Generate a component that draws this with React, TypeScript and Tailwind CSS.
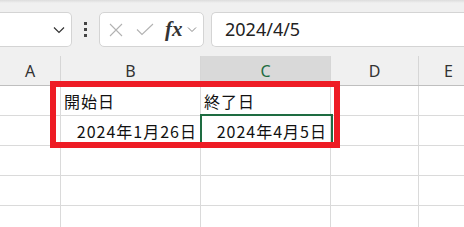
import React from 'react';

const cols = [
  { key: 'A', w: 'w-[61px]' },
  { key: 'B', w: 'w-[140px]' },
  { key: 'C', w: 'w-[130px]' },
  { key: 'D', w: 'w-[88px]' },
  { key: 'E', w: 'w-[60px]' },
];

const rows: { B?: string; C?: string; alignB?: string; alignC?: string }[] = [
  { B: '開始日', C: '終了日' },
  { B: '2024年1月26日', C: '2024年4月5日', alignB: 'right', alignC: 'right' },
  {},
  {},
  {},
];

export default function App() {
  return (
    <div className="relative w-[464px] h-[227px] overflow-hidden bg-white font-['Noto_Sans',sans-serif]">
      {/* Toolbar / formula bar */}
      <div className="h-[56px] bg-[#f0f0f0] bg-gradient-to-b from-[#dcdcdc] via-[#f0f0f0] to-[#f0f0f0] bg-[length:100%_6px] bg-no-repeat pt-[12px] flex items-start">
        <div className="flex h-[35px] w-[72px] items-center justify-end rounded-r-[5px] border border-l-0 border-[#d4d4d4] bg-white pr-[6px]">
          <svg width="12" height="8" viewBox="0 0 12 8" fill="none" stroke="#333" strokeWidth="1.2">
            <path d="M1 1.5 L6 6.5 L11 1.5" />
          </svg>
        </div>
        <div className="flex h-[35px] w-[27px] flex-col items-center justify-center gap-[3px]">
          <span className="block h-[3px] w-[3px] bg-[#444]" />
          <span className="block h-[3px] w-[3px] bg-[#444]" />
          <span className="block h-[3px] w-[3px] bg-[#444]" />
        </div>
        <div className="flex h-[35px] w-[105px] items-center rounded-[5px] border border-[#d4d4d4] bg-white">
          <svg className="ml-[9px]" width="14" height="14" viewBox="0 0 14 14" fill="none" stroke="#b2b2b2" strokeWidth="1.1">
            <path d="M1 1 L13 13 M13 1 L1 13" />
          </svg>
          <svg className="ml-[13px]" width="18" height="13" viewBox="0 0 18 13" fill="none" stroke="#b2b2b2" strokeWidth="1.1">
            <path d="M1 6.5 L6 11.5 L17 1" />
          </svg>
          <span className="ml-[11px] font-['Liberation_Serif',serif] text-[21px] font-bold italic leading-none text-[#333]">
            fx
          </span>
          <svg className="ml-[4px]" width="10" height="7" viewBox="0 0 10 7" fill="none" stroke="#888" strokeWidth="1">
            <path d="M1 1.5 L5 5.5 L9 1.5" />
          </svg>
        </div>
        <div className="ml-[7px] flex h-[35px] flex-1 items-center rounded-l-[5px] border border-r-0 border-[#d4d4d4] bg-white pl-[13px]">
          <span className="text-[18px] text-[#222]">2024/4/5</span>
        </div>
      </div>

      {/* Column headers */}
      <div className="flex h-[30px] border-b border-[#bfbfbf] bg-[#f0f0f0]">
        {cols.map((c) => (
          <div
            key={c.key}
            className={`${c.w} flex shrink-0 items-center justify-center border-r border-[#d6d6d6] text-[16px] ${
              c.key === 'C' ? 'bg-[#d9d9d9] text-[#1e6c41]' : 'text-[#333]'
            }`}
          >
            {c.key}
          </div>
        ))}
      </div>

      {/* Grid rows */}
      {rows.map((r, i) => (
        <div key={i} className="flex h-[30px] border-b border-[#dadada]">
          <div className="w-[61px] shrink-0 border-r border-[#dadada]" />
          <div
            className={`flex w-[140px] shrink-0 items-center border-r border-[#dadada] px-[3px] font-['Noto_Sans_CJK_JP',sans-serif] text-[16px] tracking-[1px] text-[#111] ${
              r.alignB === 'right' ? 'justify-end' : 'justify-start'
            }`}
          >
            {r.B}
          </div>
          <div
            className={`flex w-[130px] shrink-0 items-center border-r border-[#dadada] px-[3px] font-['Noto_Sans_CJK_JP',sans-serif] text-[16px] tracking-[1px] text-[#111] ${
              r.alignC === 'right' ? 'justify-end' : 'justify-start'
            }`}
          >
            {r.C}
          </div>
          <div className="w-[88px] shrink-0 border-r border-[#dadada]" />
          <div className="w-[60px] shrink-0" />
        </div>
      ))}

      {/* Active cell C2 */}
      <div className="absolute left-[200px] top-[114px] h-[31px] w-[133px] border-2 border-[#1e6c41]" />

      {/* Red annotation box */}
      <div className="absolute left-[50px] top-[81px] h-[67px] w-[290px] border-[6px] border-[#ee1c25]" />
    </div>
  );
}
